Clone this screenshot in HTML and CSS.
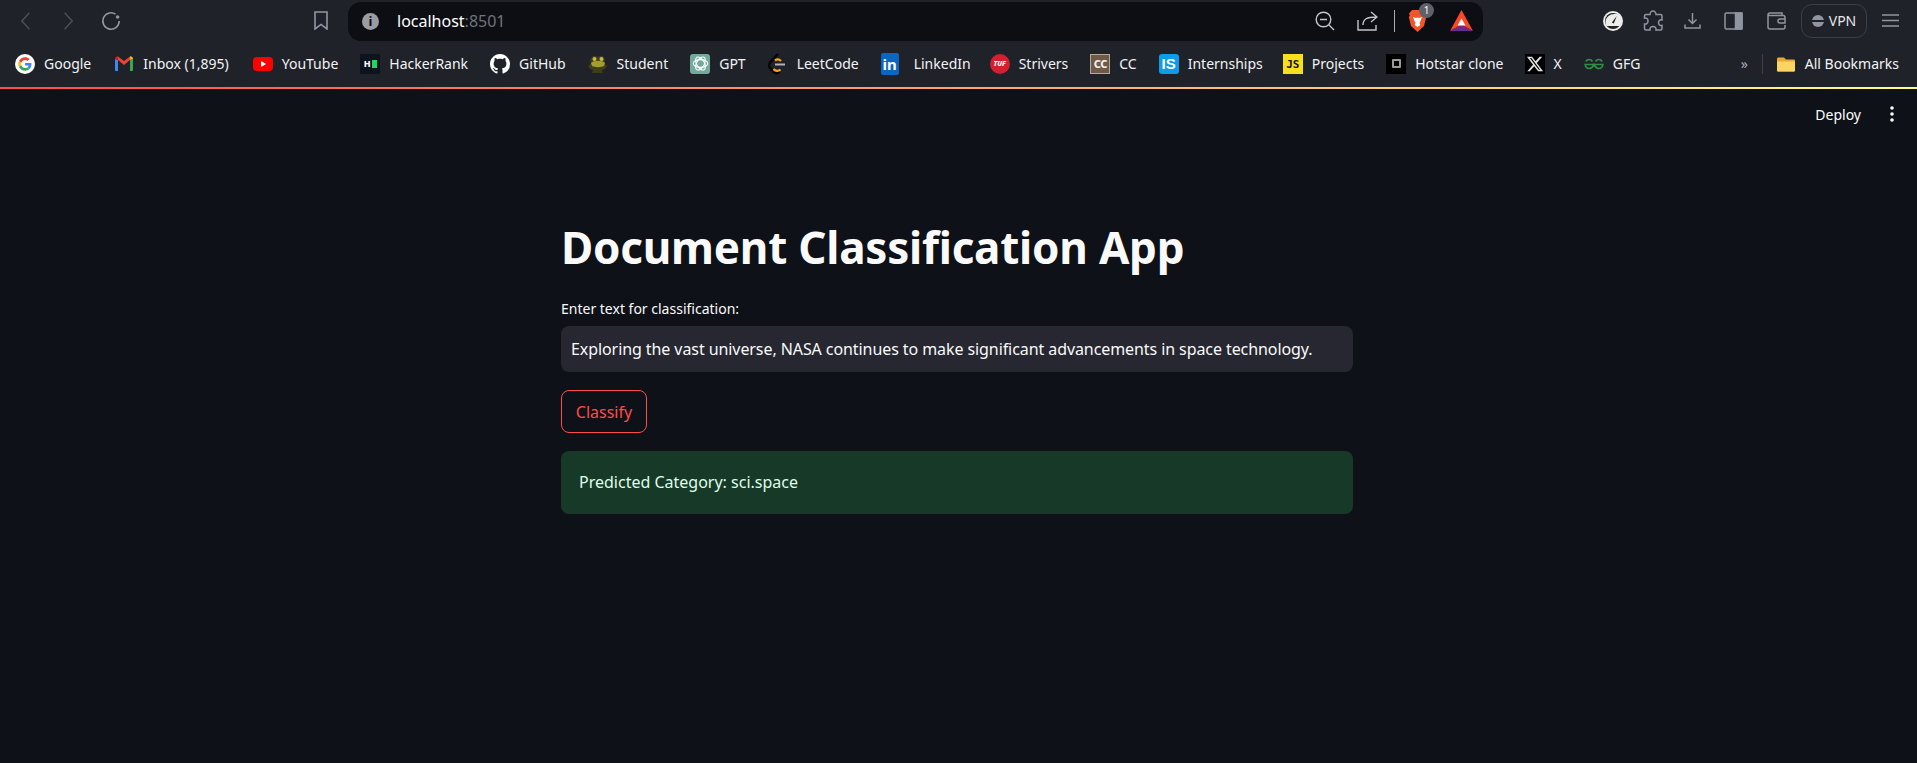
FILE: index.html
```html
<!DOCTYPE html>
<html lang="en">

<head>
    <meta charset="UTF-8">
    <meta name="viewport" content="width=device-width, initial-scale=1.0">
    <title>Document Classification App</title>
    <link rel="stylesheet" href="styles.css">
</head>

<body>
    <div class="toolbar">
        <div class="nav-btns">
            <svg class="ic-back" width="9" height="18" viewBox="0 0 9 18"><path d="M8.5 .7L.8 9l7.7 8.3" /></svg>
            <svg class="ic-forward" width="9" height="18" viewBox="0 0 9 18"><path d="M.5 .7L8.2 9 .5 17.3" /></svg>
            <svg class="ic-reload" width="20" height="20" viewBox="0 0 20 20"><path d="M14.5 3.2A8.2 8.2 0 1 0 18.2 10" /><circle cx="16.6" cy="6" r="1.8" /></svg>
            <svg class="ic-mark" width="14" height="19" viewBox="0 0 14 19"><path d="M1 1h12v17l-6-4.6L1 18z" /></svg>
        </div>
        <div class="addressbar">
            <span class="info">i</span>
            <span class="url">localhost<span class="port">:8501</span></span>
            <svg class="ic-zoom" width="20" height="20" viewBox="0 0 20 20"><circle cx="8.5" cy="8.5" r="7.3" /><path d="M14 14l5 5M5 8.5h7" /></svg>
            <svg class="ic-share" width="21" height="20" viewBox="0 0 21 20"><path d="M1 9v10h18v-5M6 14c0-6 4-8 13-8M14 1l6 5-6 5" /></svg>
            <span class="bar-sep"></span>
            <div class="brave">
                <svg width="19" height="24" viewBox="0 0 19 24"><path fill="#f1562b" d="M4 1h11l3 3.5-.8 2 1 1.6L16 17l-6.500 6L3 17 .8 8.100l1-1.600L1 4.500z" /><path fill="#fff" d="M5 8l3 1 1.500-.6L11 9l3-1-1.500 4-1 2 .8 2-2.800 2-2.800-2 .8-2-1-2z" /></svg>
                <span class="badge">1</span>
            </div>
            <svg class="ic-bat" width="23" height="22" viewBox="0 0 23 22"><path fill="#ff4724" d="M11.500 0L23 21 11.500 14.500 0 21z" /><path fill="#9e1f63" d="M0 21l11.500-6.500L23 21z" /><path fill="#662d91" d="M0 21h23l-11.500-5z" /><path fill="#fff" d="M11.500 8.500L15.500 15.500H7.500z" /></svg>
        </div>
        <div class="tools">
            <svg class="ic-gauge" width="20" height="20" viewBox="0 0 20 20"><circle cx="10" cy="10" r="10" fill="#ececea" /><circle cx="10" cy="10" r="8" fill="#202229" /><path d="M3.500 15A8 8 0 0 1 10 3.200a6.800 6.800 0 0 1 6.500 11.800z" fill="#ececea" /><path d="M8.800 11.500l5-6.500-3 7.500z" fill="#202229" /></svg>
            <svg class="ic-line" width="20" height="21" viewBox="0 0 20 21"><path d="M7 4.500C7 2.500 8.500 1 10 1s3 1.500 3 3.500h4.500c1 0 1.500 .5 1.500 1.500v4c-2-.500-3.500 .5-3.500 2.500S17 16 19 15.500v3c0 1-.5 1.500-1.500 1.500H13c.5-2-1-3.500-3-3.500S6.500 18 7 20H3c-1 0-1.500-.5-1.500-1.500V14c2 .5 3.500-1 3.500-3S3.500 7.500 1.500 8V6c0-1 .5-1.500 1.500-1.500z" /></svg>
            <svg class="ic-line" width="17" height="17" viewBox="0 0 17 17"><path d="M8.500 1v10M4.500 7.500l4 4 4-4M1 12.500V16h15v-3.500" /></svg>
            <svg class="ic-line" width="19" height="18" viewBox="0 0 19 18"><rect x="1" y="1" width="17" height="16" rx="1.500" /><rect x="11.500" y="1" width="6.500" height="16" fill="#8f95a1" /></svg>
            <svg class="ic-line" width="19" height="18" viewBox="0 0 19 18"><path d="M15 3.500V1H3C2 1 1 2 1 3v12c0 1 1 2 2 2h13c1 0 2-1 2-2v-2M1 3.500h15c1 0 2 1 2 2V7M18 7h-5c-1.200 0-2 .800-2 2s.8 2 2 2h5z" /></svg>
            <div class="vpn"><span class="vpn-dot"></span>VPN</div>
            <svg class="ic-line ic-menu" width="17" height="13" viewBox="0 0 17 13"><path d="M0 1h17M0 6.500h17M0 12h17" /></svg>
        </div>
    </div>

    <div class="bookmarks">
        <a class="item item-google">
            <svg class="fav" viewBox="0 0 20 20"><circle cx="10" cy="10" r="10" fill="#fff" /><g transform="translate(3.300 3.300) scale(.28)"><path fill="#EA4335" d="M24 9.500c3.540 0 6.710 1.220 9.210 3.600l6.850-6.850C35.900 2.380 30.470 0 24 0 14.620 0 6.510 5.380 2.560 13.220l7.980 6.190C12.430 13.720 17.740 9.500 24 9.500z" /><path fill="#4285F4" d="M46.980 24.550c0-1.570-.15-3.090-.38-4.550H24v9.020h12.940c-.58 2.960-2.260 5.480-4.780 7.180l7.730 6c4.510-4.180 7.090-10.360 7.090-17.650z" /><path fill="#FBBC05" d="M10.530 28.590c-.48-1.450-.76-2.990-.76-4.590s.27-3.140.76-4.590l-7.980-6.190C.92 16.460 0 20.120 0 24c0 3.880.92 7.540 2.560 10.780l7.970-6.190z" /><path fill="#34A853" d="M24 48c6.480 0 11.930-2.130 15.890-5.810l-7.730-6c-2.150 1.450-4.920 2.300-8.160 2.300-6.260 0-11.570-4.220-13.470-9.910l-7.980 6.190C6.510 42.620 14.620 48 24 48z" /></g></svg>
            Google
        </a>
        <a class="item item-inbox">
            <svg class="fav" viewBox="0 0 20 20"><path fill="#4285f4" d="M1 17V5l3 1v11H2c-.6 0-1-.4-1-1z" /><path fill="#34a853" d="M16 17V6l3-1v11c0 .6-.4 1-1 1z" /><path fill="#ea4335" d="M4 6l6 5 6-5v-3.500l-6 4.500-6-4.500z" /><path fill="#c5221f" d="M1 5c0-2 2-3 3-2.500V6z" /><path fill="#fbbc04" d="M16 2.500c1-.5 3 .5 3 2.500l-3 1z" /></svg>
            Inbox (1,895)
        </a>
        <a class="item">
            <svg class="fav" viewBox="0 0 20 20"><rect y="3" width="20" height="14" rx="4" fill="#f00" /><path fill="#fff" d="M8 7l5.200 3L8 13z" /></svg>
            YouTube
        </a>
        <a class="item">
            <span class="fav fav-hr"><span class="hr-h">H</span><span class="hr-box"></span></span>
            HackerRank
        </a>
        <a class="item">
            <svg class="fav" viewBox="0 0 16 16"><path fill="#fff" d="M8 0C3.580 0 0 3.580 0 8c0 3.540 2.290 6.530 5.470 7.590.4.070.55-.17.55-.38 0-.19-.01-.82-.01-1.490-2.010.37-2.530-.49-2.690-.94-.09-.23-.48-.94-.82-1.130-.28-.15-.68-.52-.01-.53.63-.01 1.080.58 1.230.82.72 1.210 1.870.87 2.330.66.070-.52.28-.87.51-1.070-1.780-.2-3.640-.89-3.640-3.950 0-.87.31-1.590.82-2.150-.08-.2-.36-1.020.08-2.120 0 0 .67-.21 2.200.82.64-.18 1.320-.27 2-.27.68 0 1.360.09 2 .27 1.530-1.040 2.200-.82 2.200-.82.44 1.100.16 1.920.08 2.120.51.56.82 1.270.82 2.150 0 3.070-1.870 3.750-3.650 3.950.29.25.54.73.54 1.480 0 1.070-.01 1.930-.01 2.200 0 .21.15.46.55.38A8.013 8.013 0 0 0 16 8c0-4.420-3.580-8-8-8z" /></svg>
            GitHub
        </a>
        <a class="item">
            <svg class="fav" viewBox="0 0 20 20"><path fill="#3d3f1b" d="M5 2h3l2 1 2-1h3l2 4-1 3 3 3-2 3-3 1 1 3H4l1-3-3-1-2-3 3-3-1-3z" /><path fill="#a59c30" d="M3 9c2-3 12-3 14 0l-1 3c-3 1.500-9 1.500-12 0z" /><circle cx="6.500" cy="5" r="2" fill="#c9b93c" /><circle cx="13.500" cy="5" r="2" fill="#c9b93c" /></svg>
            Student
        </a>
        <a class="item">
            <span class="fav fav-gpt"><svg viewBox="0 0 20 20" width="17" height="17"><g fill="none" stroke="#fff" stroke-width="1.300"><ellipse cx="10" cy="10" rx="8.500" ry="4.500" /><ellipse cx="10" cy="10" rx="8.500" ry="4.500" transform="rotate(60 10 10)" /><ellipse cx="10" cy="10" rx="8.500" ry="4.500" transform="rotate(120 10 10)" /></g></svg></span>
            GPT
        </a>
        <a class="item item-leet">
            <svg class="fav-leet" width="18" height="22" viewBox="0 0 18 22"><path fill="none" stroke="#050506" stroke-width="2.500" d="M10 1L2.500 9c-2 2-2 4.500 0 6.500l3 3c2 2 4 2 6 0" /><path fill="none" stroke="#f7a21b" stroke-width="2.200" d="M7 7.500c2-1.500 4-1.500 6 .5M5.500 16c2 2.500 5 2.500 7 .5" /><path stroke="#b3b3b3" stroke-width="2" d="M7 11.500h10" /></svg>
            LeetCode
        </a>
        <a class="item item-in">
            <span class="fav-in">in</span>
            LinkedIn
        </a>
        <a class="item">
            <span class="fav fav-tuf">TUF</span>
            Strivers
        </a>
        <a class="item">
            <span class="fav fav-cc">CC</span>
            CC
        </a>
        <a class="item item-intern">
            <span class="fav fav-is">IS</span>
            Internships
        </a>
        <a class="item">
            <span class="fav fav-js">JS</span>
            Projects
        </a>
        <a class="item item-hot">
            <span class="fav fav-hot"><span class="hot-box"></span></span>
            Hotstar clone
        </a>
        <a class="item">
            <span class="fav fav-x"><svg viewBox="0 0 24 24" width="18" height="18"><path fill="#e4e4e4" d="M18.244 2.250h3.308l-7.227 8.260 8.502 11.240H16.170l-5.214-6.817L4.990 21.750H1.680l7.730-8.835L1.254 2.250H8.080l4.713 6.231zm-1.161 17.520h1.833L7.084 4.126H5.117z" /></svg></span>
            X
        </a>
        <a class="item">
            <svg class="fav" viewBox="0 0 20 20"><path fill="none" stroke="#2f8d46" stroke-width="1.700" d="M10 10.500H1.200c.3 2.500 2 4 4 4s3.300-1 4.800-4c1.500 3 2.800 4 4.800 4s3.700-1.500 4-4H10M8.500 7.500c-.8-1.300-2-2-3.300-2-1.300 0-2.600.7-3.300 2M11.500 7.500c.8-1.300 2-2 3.300-2 1.300 0 2.600.7 3.300 2" /></svg>
            GFG
        </a>
        <div class="bm-right">
            <span class="more">»</span>
            <span class="bm-sep"></span>
            <a class="item">
                <svg class="fav" viewBox="0 0 20 20"><path fill="#e8a92f" d="M1 5c0-1 .6-1.500 1.500-1.500H8l2 2h7.500c1 0 1.500 .5 1.500 1.500v9c0 1-.5 1.500-1.500 1.500h-15C1.600 17.500 1 17 1 16z" /><path fill="#fcd462" d="M1 7.500h18V16c0 1-.5 1.500-1.500 1.500h-15C1.600 17.500 1 17 1 16z" /></svg>
                All Bookmarks
            </a>
        </div>
    </div>
    <div class="decoration"></div>

    <div class="app">
        <div class="app-header">
            <span class="deploy">Deploy</span>
            <svg class="ic-dots" width="4" height="16" viewBox="0 0 4 16"><circle cx="2" cy="2" r="1.800" /><circle cx="2" cy="8" r="1.800" /><circle cx="2" cy="14" r="1.800" /></svg>
        </div>
        <div class="main">
            <h1>Document Classification App</h1>
            <label class="field-label">Enter text for classification:</label>
            <div class="text-input">Exploring the vast universe, NASA continues to make significant advancements in space technology.</div>
            <button class="classify">Classify</button>
            <div class="alert">Predicted Category: sci.space</div>
        </div>
    </div>
</body>

</html>
```

FILE: styles.css
```css
* {
    box-sizing: border-box;
}

body {
    margin: 0;
    padding: 0;
    height: 763px;
    overflow: hidden;
    background-color: #0e1117;
    color: #fff;
    font-family: "Noto Sans", sans-serif;
}

svg {
    display: block;
    flex: none;
}

/* browser top bar */
.toolbar {
    height: 41px;
    display: flex;
    align-items: center;
    background-color: #202229;
}

.nav-btns {
    width: 348px;
    height: 41px;
    display: flex;
    align-items: center;
    padding-left: 21px;
}

.nav-btns path {
    fill: none;
    stroke-width: 1.6;
}

.ic-back,
.ic-forward {
    stroke: #4b4e57;
}

.ic-forward {
    margin-left: 34px;
}

.ic-reload {
    margin-left: 28px;
    stroke: #9197a3;
}

.ic-reload circle {
    fill: #9197a3;
    stroke: none;
}

.ic-mark {
    margin-left: 193px;
    stroke: #9197a3;
}

.addressbar {
    width: 1135px;
    height: 39px;
    margin-top: 1px;
    display: flex;
    align-items: center;
    padding-left: 14px;
    background-color: #0d0e13;
    border-radius: 13px;
}

.info {
    width: 17px;
    height: 17px;
    border-radius: 50%;
    background-color: #9a9ca3;
    color: #0d0e13;
    font-size: 13px;
    font-weight: 700;
    line-height: 17px;
    text-align: center;
}

.url {
    margin-left: 18px;
    width: 554px;
    flex: none;
    font-size: 16px;
    color: #fff;
    white-space: nowrap;
}

.port {
    color: #70737a;
}

.addressbar .ic-zoom,
.addressbar .ic-share {
    fill: none;
    stroke: #c2c5cc;
    stroke-width: 1.4;
}

.ic-zoom {
    margin-left: 364px;
}

.ic-share {
    margin-left: 22px;
}

.bar-sep {
    width: 1px;
    height: 22px;
    margin-left: 16px;
    background-color: #a9acb3;
}

.brave {
    position: relative;
    margin-left: 13px;
}

.badge {
    position: absolute;
    top: -6px;
    right: -7px;
    width: 15px;
    height: 15px;
    border-radius: 50%;
    background-color: #5f6169;
    color: #fff;
    font-size: 10px;
    line-height: 15px;
    text-align: center;
}

.ic-bat {
    margin-left: 23px;
}

.tools {
    flex: 1;
    display: flex;
    align-items: center;
    padding-left: 120px;
}

.ic-line {
    fill: none;
    stroke: #8f95a1;
    stroke-width: 1.5;
}

.tools .ic-line:nth-child(2) {
    margin-left: 20px;
}

.tools .ic-line:nth-child(3) {
    margin-left: 21px;
}

.tools .ic-line:nth-child(4) {
    margin-left: 23px;
}

.tools .ic-line:nth-child(5) {
    margin-left: 24px;
}

.vpn {
    width: 66px;
    height: 34px;
    margin-left: 15px;
    display: flex;
    align-items: center;
    justify-content: center;
    gap: 5px;
    border: 1px solid #3c3f49;
    border-radius: 11px;
    font-size: 14px;
    color: #e6e7ea;
}

.vpn-dot {
    width: 12px;
    height: 12px;
    border-radius: 50%;
    background: linear-gradient(#8f95a1 0 42%, #202229 42% 58%, #8f95a1 58%);
}

.ic-menu {
    margin-left: 15px;
}

/* bookmarks */
.bookmarks {
    height: 46px;
    display: flex;
    align-items: center;
    gap: 22px;
    padding-left: 15px;
    padding-bottom: 1px;
    background-color: #202229;
    font-size: 14px;
}

.item {
    display: flex;
    align-items: center;
    gap: 9px;
    color: #f2f3f5;
    white-space: nowrap;
}

.item-google {
    margin-right: 1px;
}

.item-inbox {
    margin-right: 2px;
}

.item-intern {
    margin-right: -2px;
}

.item-hot {
    margin-right: -1px;
}

.fav {
    width: 20px;
    height: 20px;
    flex: none;
}

.fav-hr {
    display: flex;
    align-items: center;
    justify-content: center;
    gap: 1px;
    background-color: #0e141e;
}

.hr-h {
    font-size: 9px;
    font-weight: 800;
    color: #fff;
}

.hr-box {
    width: 5px;
    height: 8px;
    background-color: #1ed760;
}

.fav-gpt {
    display: flex;
    align-items: center;
    justify-content: center;
    background-color: #74aa9c;
    border-radius: 3px;
}

.item-leet {
    gap: 11px;
}

.item-in {
    gap: 15px;
    margin-right: -3px;
}

.fav-in {
    width: 18px;
    height: 22px;
    background-color: #0a66c2;
    border-radius: 2px;
    color: #fff;
    font-size: 15px;
    font-weight: 700;
    line-height: 22px;
    text-align: center;
}

.fav-tuf {
    border-radius: 50%;
    background-color: #d41f30;
    color: #fff;
    font-size: 7px;
    font-weight: 800;
    font-style: italic;
    line-height: 20px;
    text-align: center;
}

.fav-cc {
    background-color: #6f5a48;
    border: 1px solid #b4a899;
    color: #f2efe9;
    font-size: 11px;
    font-weight: 800;
    line-height: 18px;
    letter-spacing: -0.5px;
    text-align: center;
}

.fav-is {
    border-radius: 3px;
    background-color: #0e9be8;
    color: #fff;
    font-family: "Liberation Sans", sans-serif;
    font-size: 15px;
    font-weight: 700;
    line-height: 20px;
    text-align: center;
}

.fav-js {
    background-color: #f7df1e;
    color: #111;
    font-family: "DejaVu Sans Mono", monospace;
    font-size: 11px;
    font-weight: 700;
    line-height: 22px;
    text-align: center;
}

.fav-hot {
    display: flex;
    align-items: center;
    justify-content: center;
    background-color: #000;
}

.hot-box {
    width: 9px;
    height: 9px;
    border: 2px solid #9a9a9a;
    border-radius: 1px;
}

.fav-x {
    display: flex;
    align-items: center;
    justify-content: center;
    background-color: #000;
}

.bm-right {
    margin-left: auto;
    display: flex;
    align-items: center;
    padding-right: 18px;
}

.more {
    color: #a9acb3;
}

.bm-sep {
    width: 1px;
    height: 20px;
    margin: 0 13px 0 14px;
    background-color: #3d4049;
}

.decoration {
    height: 2px;
    background-image: linear-gradient(90deg, #ff4b4b, #fffd80);
}

/* streamlit part */
.app-header {
    height: 40px;
    display: flex;
    align-items: center;
    justify-content: flex-end;
    gap: 29px;
    padding-top: 10px;
    padding-right: 23px;
    font-size: 14px;
}

.ic-dots {
    fill: #fafafa;
}

.main {
    width: 792px;
    margin-left: 561px;
    padding-top: 83px;
}

h1 {
    margin: 0;
    font-size: 44px;
    font-weight: 700;
    line-height: 70px;
    color: #fafafa;
    letter-spacing: -0.23px;
}

.field-label {
    display: block;
    margin-top: 17px;
    font-size: 14px;
    line-height: 20px;
    color: #fafafa;
}

.text-input {
    height: 46px;
    margin-top: 7px;
    padding: 0 10px;
    background-color: #262730;
    border-radius: 8px;
    font-size: 16px;
    line-height: 46px;
    letter-spacing: -0.08px;
    color: #fafafa;
    white-space: nowrap;
}

.classify {
    display: block;
    width: 86px;
    height: 43px;
    margin-top: 18px;
    padding: 0;
    background-color: transparent;
    border: 1px solid #ff4b4b;
    border-radius: 8px;
    font-family: inherit;
    font-size: 16px;
    color: #ff4b4b;
}

.alert {
    height: 63px;
    margin-top: 18px;
    padding: 0 18px;
    background-color: #173928;
    border-radius: 8px;
    font-size: 16px;
    line-height: 63px;
    color: #dffde9;
}
```
